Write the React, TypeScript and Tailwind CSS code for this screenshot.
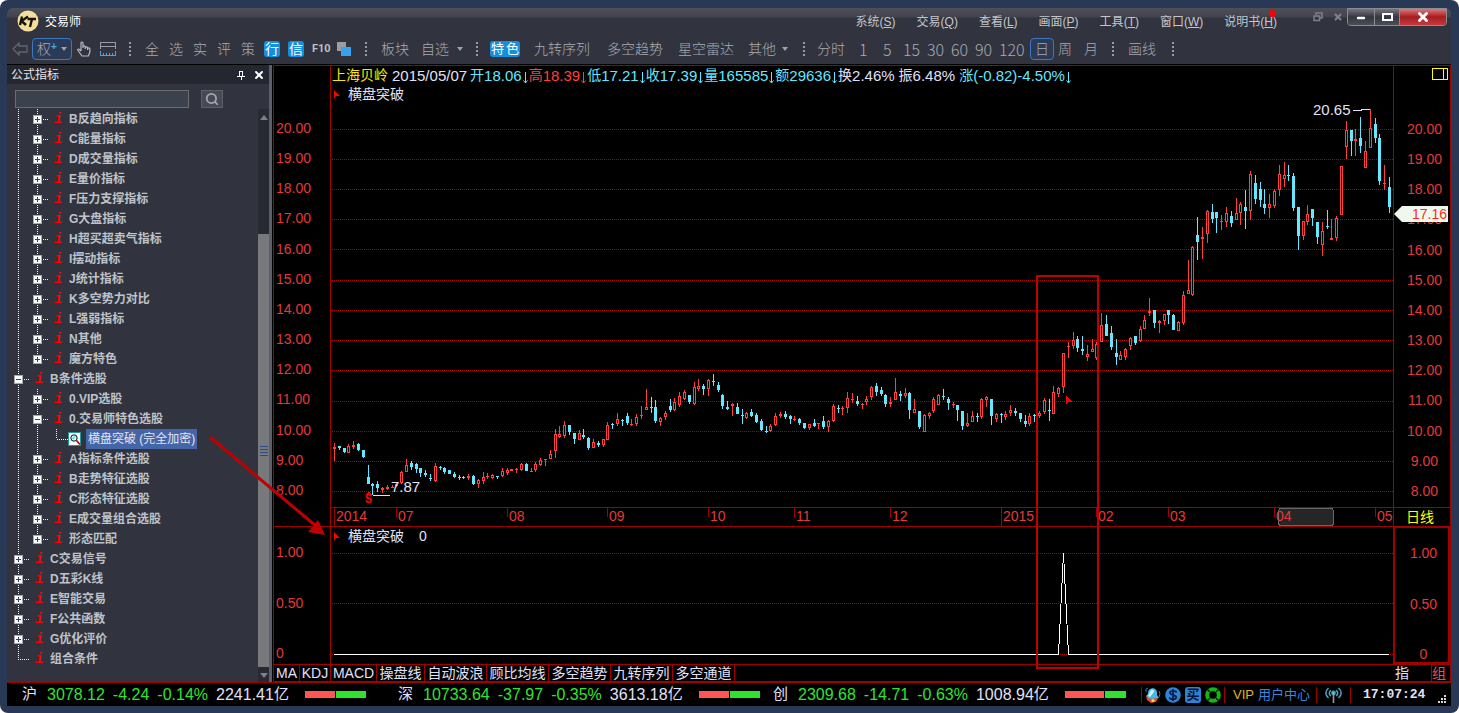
import { Minus, Search, X } from "lucide-react"
import clsx from "clsx"

// [up, high, body top, body bottom, low]
const candles: number[][] = [
  [1,443,447,449,461],[0,446,446,448,450],[0,448,448,452,453],[1,444,446,453,453],[1,441,445,447,449],
  [0,443,444,450,451],[0,450,450,457,458],[0,465,477,484,484],[0,483,484,486,495],[0,481,484,488,492],
  [1,487,488,490,493],[1,485,487,489,490],[1,485,487,488,488],[1,483,484,486,487],[1,471,472,483,484],
  [1,459,465,472,472],[0,461,463,467,470],[0,463,464,469,473],[0,468,468,473,477],[0,470,473,475,477],
  [0,474,478,479,481],[1,463,466,481,482],[0,466,467,468,470],[0,467,468,472,474],[0,470,470,474,474],
  [0,472,474,477,478],[0,475,477,478,480],[0,476,477,478,479],[1,474,476,478,480],[0,475,476,484,485],
  [1,479,480,484,488],[1,472,477,481,484],[1,473,476,477,479],[1,474,475,478,479],[0,476,476,477,479],
  [1,468,471,476,477],[1,468,470,473,475],[1,469,469,471,471],[1,468,469,470,473],[1,463,464,470,471],
  [0,463,464,471,471],[1,468,471,472,472],[1,462,464,470,472],[1,458,460,465,466],[1,459,459,460,466],
  [1,450,454,459,459],[1,429,434,451,458],[1,426,434,437,438],[1,421,425,436,438],[0,425,425,432,435],
  [0,433,433,439,444],[1,430,433,440,440],[0,429,435,437,439],[0,437,438,448,450],[1,439,442,448,448],
  [0,441,443,445,447],[1,439,439,445,447],[1,422,425,440,440],[0,423,424,425,429],[1,413,419,424,426],
  [0,419,420,421,426],[0,413,416,423,425],[1,419,424,425,426],[1,414,417,424,426],[1,406,415,416,419],
  [1,389,407,410,410],[0,397,407,408,413],[0,400,407,421,423],[1,417,418,422,426],[1,411,413,417,420],
  [0,399,406,410,412],[1,398,402,410,411],[1,392,396,405,407],[1,390,392,399,400],[0,395,395,402,404],
  [1,382,387,404,405],[1,379,386,389,391],[0,384,386,389,395],[1,379,380,389,396],[0,374,381,382,386],
  [0,382,385,390,392],[0,394,395,406,409],[0,401,407,409,410],[1,403,404,406,416],[0,403,407,414,414],
  [0,409,415,416,424],[1,412,413,418,419],[0,409,412,416,417],[0,413,415,422,423],[0,419,421,430,431],
  [0,426,431,432,433],[1,424,426,431,432],[1,413,416,425,426],[1,412,414,416,418],[0,411,414,417,419],
  [0,415,416,419,424],[1,416,419,420,421],[0,418,419,423,425],[0,423,423,428,429],[1,424,424,428,430],
  [0,419,423,426,427],[1,423,423,424,429],[0,416,421,427,429],[1,420,421,427,432],[1,404,406,421,422],
  [0,405,408,409,413],[1,406,408,409,415],[1,392,398,408,413],[1,393,399,400,403],[0,396,401,404,406],
  [1,403,404,405,409],[1,396,399,402,405],[1,386,387,397,400],[0,383,386,392,396],[0,387,390,394,396],
  [0,394,395,404,407],[1,397,402,404,407],[1,378,392,400,400],[0,391,394,396,401],[1,388,393,396,398],
  [0,392,393,410,419],[1,399,409,413,413],[0,411,411,427,429],[1,414,415,432,432],[1,412,413,416,419],
  [1,397,399,411,413],[1,394,395,405,405],[0,389,396,397,400],[0,397,399,403,410],[1,402,404,405,408],
  [0,405,405,410,421],[0,411,411,426,430],[1,413,423,426,427],[1,411,416,422,422],[0,413,416,417,422],
  [1,398,399,417,419],[1,396,397,400,407],[0,399,399,416,425],[1,413,414,419,422],[0,413,414,415,423],
  [1,411,414,417,420],[1,405,410,413,416],[0,408,411,413,416],[0,413,413,419,422],[0,415,421,424,427],
  [1,413,416,424,426],[0,414,415,416,422],[1,411,413,416,418],[1,398,400,412,414],[0,399,410,411,421],
  [1,386,392,414,414],[1,387,388,394,397],[1,353,353,387,393],[1,342,346,347,358],[1,332,340,346,349],
  [0,336,339,348,352],[0,336,349,351,355],[1,345,354,357,361],[1,339,349,352,352],[1,342,344,358,360],
  [1,313,325,342,342],[0,315,324,336,336],[0,326,333,347,350],[0,339,353,357,365],[1,351,355,360,360],
  [1,348,349,357,360],[1,337,338,346,350],[0,336,336,343,345],[1,326,329,341,342],[1,315,320,329,329],
  [1,298,311,313,316],[0,310,310,323,328],[1,320,321,323,333],[1,314,314,321,325],[0,310,310,315,324],
  [0,314,315,330,330],[1,321,322,331,331],[1,291,295,323,325],[1,260,290,294,294],[1,246,247,295,296],
  [0,217,235,242,260],[1,227,237,239,259],[1,210,211,234,243],[0,204,212,219,223],[0,212,212,218,233],
  [1,215,221,222,230],[1,207,213,222,227],[0,211,216,223,227],[1,198,213,220,220],[1,202,204,213,225],
  [0,190,207,211,229],[1,171,174,211,220],[0,175,183,199,204],[0,182,189,200,207],[0,189,204,208,214],
  [1,194,204,208,218],[1,189,191,206,208],[1,165,174,190,196],[1,162,175,179,187],[0,165,175,176,181],
  [0,173,176,208,211],[0,207,207,236,250],[1,221,221,236,240],[1,205,214,222,225],[0,209,209,218,226],
  [0,222,222,237,244],[1,222,231,245,256],[0,210,226,227,229],[1,219,238,240,240],[1,216,218,238,241],
  [1,166,166,215,215],[1,121,130,147,159],[0,130,130,141,156],[1,129,139,141,156],[0,117,138,146,153],
  [1,141,151,168,168],[1,109,128,148,148],[0,118,124,138,143],[0,134,138,181,185],[1,165,183,184,190],
  [0,177,187,207,213],
]

const gridLines = [129, 159, 189, 219, 249, 280, 310, 340, 370, 401, 431, 461, 491]
const prices = ["20.00", "19.00", "18.00", "17.00", "16.00", "15.00", "14.00", "13.00", "12.00", "11.00", "10.00", "9.00", "8.00"]

const months = [
  { label: "2014", x: 334, tall: true },
  { label: "07", x: 396 },
  { label: "08", x: 507 },
  { label: "09", x: 607 },
  { label: "10", x: 708 },
  { label: "11", x: 794 },
  { label: "12", x: 890 },
  { label: "2015", x: 1001, tall: true },
  { label: "02", x: 1096 },
  { label: "03", x: 1168 },
  { label: "04", x: 1274 },
  { label: "05", x: 1375 },
]

const menus = [
  ["系统", "S"],
  ["交易", "Q"],
  ["查看", "L"],
  ["画面", "P"],
  ["工具", "T"],
  ["窗口", "W"],
  ["说明书", "H"],
]

type Node = { label: string; level: 1 | 2 | 3; open?: boolean; leaf?: boolean; last?: boolean }

const tree: Node[] = [
  { label: "B反趋向指标", level: 2 },
  { label: "C能量指标", level: 2 },
  { label: "D成交量指标", level: 2 },
  { label: "E量价指标", level: 2 },
  { label: "F压力支撑指标", level: 2 },
  { label: "G大盘指标", level: 2 },
  { label: "H超买超卖气指标", level: 2 },
  { label: "I摆动指标", level: 2 },
  { label: "J统计指标", level: 2 },
  { label: "K多空势力对比", level: 2 },
  { label: "L强弱指标", level: 2 },
  { label: "N其他", level: 2 },
  { label: "魔方特色", level: 2, last: true },
  { label: "B条件选股", level: 1, open: true },
  { label: "0.VIP选股", level: 2 },
  { label: "0.交易师特色选股", level: 2, open: true },
  { label: "横盘突破 (完全加密)", level: 3, leaf: true },
  { label: "A指标条件选股", level: 2 },
  { label: "B走势特征选股", level: 2 },
  { label: "C形态特征选股", level: 2 },
  { label: "E成交量组合选股", level: 2 },
  { label: "形态匹配", level: 2, last: true },
  { label: "C交易信号", level: 1 },
  { label: "D五彩K线", level: 1 },
  { label: "E智能交易", level: 1 },
  { label: "F公共函数", level: 1 },
  { label: "G优化评价", level: 1 },
  { label: "组合条件", level: 1, leaf: true, last: true },
]

const quotes = [
  { name: "沪", value: "3078.12", change: "-4.24", pct: "-0.14%", amount: "2241.41", red: "w-[30px]", green: "w-[30px]", width: "w-[376px]" },
  { name: "深", value: "10733.64", change: "-37.97", pct: "-0.35%", amount: "3613.18", red: "w-[30px]", green: "w-[30px]", width: "w-[375px]" },
  { name: "创", value: "2309.68", change: "-14.71", pct: "-0.63%", amount: "1008.94", red: "w-[39px]", green: "w-[21px]", width: "w-[368px]" },
]

const summary = [
  { label: "开", value: "18.06", arrow: true, color: "text-[#66e6ff]" },
  { label: "高", value: "18.39", arrow: true, color: "text-[#ff4040]" },
  { label: "低", value: "17.21", arrow: true, color: "text-[#66e6ff]" },
  { label: "收", value: "17.39", arrow: true, color: "text-[#66e6ff]" },
  { label: "量", value: "165585", arrow: true, color: "text-[#66e6ff]" },
  { label: "额", value: "29636", arrow: true, color: "text-[#66e6ff]" },
  { label: "换", value: "2.46%", arrow: false, color: "text-[#e0e0f8]" },
  { label: "振", value: "6.48%", arrow: false, color: "text-[#e0e0f8]" },
  { label: "涨", value: "(-0.82)-4.50%", arrow: true, color: "text-[#66e6ff]" },
]

const tabs = ["操盘线", "自动波浪", "顾比均线", "多空趋势", "九转序列", "多空通道"]

function Logo() {
  return (
    <svg className="h-[22px] w-[22px]" viewBox="0 0 22 22">
      <circle cx="11" cy="11" r="10.5" fill="#f5dd9c" />
      <path d="M5 6.500 3 15M11 6.500l-6.500 4.500 4.500 4" fill="none" stroke="#17140c" strokeWidth="2.400" />
      <path d="M10.500 9h8.500M15 9l-2 8" fill="none" stroke="#17140c" strokeWidth="2.400" />
    </svg>
  )
}

function Dots({ className }: { className?: string }) {
  return (
    <svg className={clsx("h-3.5 w-[3px] shrink-0", className)} viewBox="0 0 3 14" shapeRendering="crispEdges">
      <path d="M1.500 0v14" stroke="#9a9ca3" strokeWidth="2" strokeDasharray="2 2" />
    </svg>
  )
}

function Caret() {
  return (
    <svg className="h-1 w-[6px] shrink-0" viewBox="0 0 6 4">
      <path d="M0 0h6L3 4z" fill="#a0a2a8" />
    </svg>
  )
}

function Tool({ label, className }: { label: string; className: string }) {
  return <button className={clsx("shrink-0 whitespace-nowrap text-left", className)}>{label}</button>
}

function TitleBar() {
  return (
    <header className="flex h-[26px] items-center rounded-t-md bg-[linear-gradient(#4d4f59,#41444d_9px,#31343f_10px)] pl-2.5 text-xs text-[#c4c6cb]">
      <Logo />
      <h1 className="pt-0.5 pl-1.5 text-xs text-white">交易师</h1>
      <nav className="ml-auto flex gap-[21px] pt-0.5">
        {menus.map(([name, key]) => (
          <button key={key} className="relative whitespace-nowrap">
            {name}(<span className="underline">{key}</span>)
            {key === "H" && <span className="absolute -top-1 right-px h-[7px] w-[7px] rounded-full bg-[#ff0000]" />}
          </button>
        ))}
      </nav>
      <div className="ml-9 flex gap-2.5 self-start pt-1">
        <button aria-label="还原子窗口">
          <svg className="h-2.5 w-2.5" viewBox="0 0 10 10" fill="none" stroke="#7d8088" strokeWidth="1.500">
            <path d="M3 3V1h6v5H7M1 4h5.500v4.500H1z" />
          </svg>
        </button>
        <button aria-label="关闭子窗口">
          <X className="h-2.5 w-2.5 text-[#7d8088]" strokeWidth={5} />
        </button>
      </div>
      <div className="mr-1 ml-1 flex h-[18px] self-start overflow-hidden rounded-b border border-[#8b8d95] text-white">
        <button aria-label="最小化" className="flex w-[26px] items-end justify-center bg-[linear-gradient(#75777f,#34373f_50%,#4b4e56)] pb-0.5">
          <Minus className="h-2.5 w-3.5" strokeWidth={6} />
        </button>
        <button aria-label="最大化" className="flex w-[26px] items-center justify-center border-x border-[#8b8d95] bg-[linear-gradient(#75777f,#34373f_50%,#4b4e56)]">
          <span className="h-2 w-[11px] border-2 border-white" />
        </button>
        <button aria-label="关闭" className="flex w-[46px] items-center justify-center bg-[linear-gradient(#e0777a,#a51d20_50%,#c8393c)]">
          <X className="h-3.5 w-3.5" strokeWidth={5} />
        </button>
      </div>
    </header>
  )
}

function Toolbar() {
  return (
    <div className="flex h-[31px] items-center overflow-hidden border-b border-black bg-[#31343f] pl-[5px] text-sm font-light text-[#a9abb1]">
      <button aria-label="后退" className="w-5">
        <svg className="h-3.5 w-4" viewBox="0 0 16 14" fill="none" stroke="#62656e" strokeWidth="1.300">
          <path d="M1 7l6-6v3h8v6H7v3z" />
        </svg>
      </button>
      <button className="flex h-[22px] w-10 items-center justify-between rounded-sm border border-[#3b78c4] bg-[#2b3a57] px-1">
        <span>
          权<sup className="relative -top-1 text-[10px] font-bold text-[#3fa9f0]">+</sup>
        </span>
        <Caret />
      </button>
      <button aria-label="移动" className="ml-1 w-5">
        <svg className="h-4 w-4" viewBox="0 0 16 16" fill="none" stroke="#b8babf" strokeWidth="1.200">
          <path d="M5 10V2a1 1 0 0 1 2 0v5m0-1a1 1 0 0 1 2.300 0v2m0-1a1 1 0 0 1 2.300 0v2m0-1a1 1 0 0 1 2.300 0v3l-1.500 4H6L2 9.500c-.8-1 .5-1.900 1.400-1L5 10" />
        </svg>
      </button>
      <button aria-label="刻度" className="ml-1 w-7">
        <svg className="h-[15px] w-4" viewBox="0 0 16 15" shapeRendering="crispEdges" fill="none">
          <path d="M.5 7V.5h15V7M.5 4.500h15" stroke="#9a9ca3" />
          <path d="M.5 9v4.500h15V9M3.500 11v2M6.500 11v2M9.500 11v2M12.500 11v2" stroke="#3fa9f0" />
        </svg>
      </button>
      <Dots className="mr-3.5" />
      <Tool label="全" className="w-6" />
      <Tool label="选" className="w-6" />
      <Tool label="实" className="w-6" />
      <Tool label="评" className="w-6" />
      <Tool label="策" className="w-[23px]" />
      <button className="mr-2 h-4 w-4 rounded-[3px] bg-[#148fe0] text-center text-sm leading-4 font-normal text-white">行</button>
      <button className="mr-2 h-4 w-4 rounded-[3px] bg-[#148fe0] text-center text-sm leading-4 font-normal text-white">信</button>
      <button className="w-6 text-left font-['Roboto',sans-serif] text-[11px] font-bold text-[#bdbfc4]">F10</button>
      <button aria-label="叠加" className="w-7">
        <svg className="h-[15px] w-4" viewBox="0 0 16 15" shapeRendering="crispEdges">
          <path d="M1 0h9v9H1z" fill="#9b9da3" />
          <path d="M5 5h10v9H5z" fill="#38a3ec" />
        </svg>
      </button>
      <Dots className="mr-3.5" />
      <Tool label="板块" className="w-10" />
      <Tool label="自选" className="w-9" />
      <Caret />
      <Dots className="mr-3 ml-3" />
      <button className="mr-3.5 flex h-4 w-[30px] items-center justify-between rounded-[3px] bg-[#148fe0] px-px text-[13px] leading-4 font-normal text-white">
        <span>特</span>
        <span>色</span>
      </button>
      <Tool label="九转序列" className="w-[73px]" />
      <Tool label="多空趋势" className="w-[71px]" />
      <Tool label="星空雷达" className="w-[70px]" />
      <Tool label="其他" className="w-[34px]" />
      <Caret />
      <Dots className="mr-3 ml-3.5" />
      <Tool label="分时" className="w-[42px]" />
      <div className="flex font-['Noto_Sans_CJK_SC',sans-serif] text-base">
        <Tool label="1" className="w-6" />
        <Tool label="5" className="w-5" />
        <Tool label="15" className="w-6" />
        <Tool label="30" className="w-6" />
        <Tool label="60" className="w-6" />
        <Tool label="90" className="w-6" />
        <Tool label="120" className="w-[31px]" />
      </div>
      <button className="mr-1 h-[22px] w-6 rounded-sm border border-[#3b78c4] bg-[#2b3a57] leading-5">日</button>
      <Tool label="周" className="w-[26px]" />
      <Tool label="月" className="w-[27px]" />
      <Dots className="mr-3.5" />
      <Tool label="画线" className="w-[43px]" />
      <Dots />
    </div>
  )
}

function Guides({ node }: { node: Node }) {
  const { level, leaf, last, open } = node
  const x = level === 1 ? 11 : 30
  const width = level === 1 ? 28 : level === 2 ? 47 : 61
  return (
    <svg width={width} height="20" viewBox={`0 0 ${width} 20`} shapeRendering="crispEdges" fill="none">
      <g stroke="#f0f0f0" strokeDasharray="1 1">
        <path d={level === 1 && last ? "M11.500 0v10" : "M11.500 0v20"} />
        {level > 1 && <path d={last ? "M30.500 0v10" : "M30.500 0v20"} />}
        {level === 3 ? <path d="M49.500 0v10h11" /> : <path d={`M${x} 10.500h11`} />}
      </g>
      {!leaf && (
        <>
          <rect x={x - 3.5} y="6.500" width="8" height="8" fill="#fff" stroke="#a8a8a8" />
          <path d={`M${x - 2} 10.500h5`} stroke="#2a4383" />
          {!open && <path d={`M${x + 0.5} 8v5`} stroke="#2a4383" />}
        </>
      )}
    </svg>
  )
}

function FormulaIcon() {
  return (
    <svg className="mr-[5px] h-3.5 w-[13px]" viewBox="0 0 13 14">
      <path d="M.5.5h12v13H.5z" fill="#fff" stroke="#1d9c9c" />
      <circle cx="6" cy="6" r="3.200" fill="#bff" stroke="#111" />
      <path d="M4.500 7 7 4.500" stroke="#1bb" />
      <path d="m8.500 8.500 3.500 4" stroke="#c00" strokeWidth="1.800" />
    </svg>
  )
}

function Sidebar() {
  return (
    <aside className="mr-px flex w-[265px] shrink-0 flex-col border-r-[3px] border-[#5c5f68] bg-[#31343f]">
      <div className="flex h-[19px] items-center bg-[#24272f] px-1 text-xs text-[#e6e6ea]">
        <h2>公式指标</h2>
        <button aria-label="固定" className="ml-auto">
          <svg className="h-2.5 w-2" viewBox="0 0 8 10" shapeRendering="crispEdges" fill="none" stroke="#fff">
            <path d="M2.500 6V1.500h3V6M0 6.500h8M4 7v3M5.500 1v5" />
          </svg>
        </button>
        <button aria-label="关闭面板" className="ml-2">
          <X className="h-3 w-3 text-white" strokeWidth={4} />
        </button>
      </div>
      <form className="flex items-center gap-3 pt-1.5 pb-px pl-2">
        <input aria-label="搜索公式" className="h-[18px] w-[174px] border border-[#6b6c6c] bg-[#3c414e] px-1 text-xs text-white outline-none" />
        <button type="button" aria-label="搜索" className="flex h-[18px] w-[22px] items-center justify-center border border-[#5d6069] bg-[#474a55]">
          <Search className="h-3.5 w-3.5 text-[#a5a7ad]" strokeWidth={3} />
        </button>
      </form>
      <div className="flex min-h-0 flex-1">
        <ul className="min-w-0 flex-1 text-xs font-bold text-[#bfc3c9]">
          {tree.map((node) => (
            <li key={node.label} className="flex h-5 items-center whitespace-nowrap">
              <Guides node={node} />
              {node.level === 3 ? (
                <>
                  <FormulaIcon />
                  <button className="h-5 bg-[#4565a9] px-0.5 font-normal text-[#e2e6ee]">{node.label}</button>
                </>
              ) : (
                <>
                  <span className="w-[15px] font-['Liberation_Mono',monospace] text-sm text-[#ff0000] italic">i</span>
                  <button>{node.label}</button>
                </>
              )}
            </li>
          ))}
        </ul>
        <div className="flex w-[11px] flex-col items-center bg-[#272a33]">
          <svg className="mt-1.5 mb-0.5 h-[5px] w-2" viewBox="0 0 8 5">
            <path d="M0 5h8L4 0z" fill="#7d808a" />
          </svg>
          <div className="mt-28 flex w-full flex-1 items-center justify-center bg-[#77797d]">
            <svg className="h-2.5 w-2" viewBox="0 0 8 10" shapeRendering="crispEdges" stroke="#2b4a8c">
              <path d="M0 .5h8M0 3.500h8M0 6.500h8M0 9.500h8" />
            </svg>
          </div>
          <svg className="mt-1.5 mb-1 h-[5px] w-2" viewBox="0 0 8 5">
            <path d="M0 0h8L4 5z" fill="#7d808a" />
          </svg>
        </div>
      </div>
    </aside>
  )
}

function Candle({ data, index }: { data: number[]; index: number }) {
  const [up, high, top, bottom, low] = data
  const x = Math.round(334 + index * 4.7955)
  const color = up ? "#ff4040" : "#66e6ff"
  const hollow = up && bottom - top > 2
  return (
    <g fill={color}>
      <rect x={x} y={high} width="1" height={top - high} />
      <rect x={x} y={bottom} width="1" height={low - bottom} />
      <rect x={x - 1} y={top} width="3" height={bottom - top} />
      {hollow && <rect x={x} y={top + 1} width="1" height={bottom - top - 2} fill="#000" />}
    </g>
  )
}

function IndicatorName({ value }: { value?: string }) {
  return (
    <div className="flex items-center gap-2 pl-0.5 text-sm leading-[19px] text-[#e0e0f8]">
      <svg className="h-2.5 w-[6px]" viewBox="0 0 6 10">
        <path d="M0 0v9l2-3h4z" fill="#f00" />
      </svg>
      <span>横盘突破</span>
      {value && <span className="pl-[7px]">{value}</span>}
    </div>
  )
}

function PriceChart() {
  return (
    <div className="relative border-l border-[#a00000]">
      <svg className="absolute inset-0 h-full w-full" viewBox="331 66 1062 441" preserveAspectRatio="none" shapeRendering="crispEdges">
        {gridLines.map((y) => (
          <path key={y} d={`M332 ${y}.5H1393`} stroke="#b00000" strokeDasharray="1 1" />
        ))}
        {candles.map((c, i) => (
          <Candle key={i} data={c} index={i} />
        ))}
        <path d="M373 495.500h17M1353 110.500h8v-1h9" fill="none" stroke="#e0e0f8" />
        <path d="M1066 396v9l2-3h4z" fill="#f00" />
        <g className="font-['Liberation_Sans',sans-serif] text-[15px]" fill="#e0e0f8">
          <text x="391" y="492">7.87</text>
          <text x="1313" y="115">20.65</text>
        </g>
        <path d="M366 495l3-4 3 4z" fill="#f00" />
        <text x="365" y="503" fill="#f00" className="font-['Liberation_Mono',monospace] text-xs font-bold">S</text>
      </svg>
      <div className="relative pl-px leading-[19px] whitespace-nowrap text-[#e0e0f8]">
        <div className="flex text-[15px]">
          <span className="mr-1 text-sm leading-[19px] text-[#ffe600]">上海贝岭</span>
          <span className="mr-[3px]">2015/05/07</span>
          {summary.map((s) => (
            <span key={s.label} className={clsx("flex", s.color, s.arrow ? "" : "mr-1")}>
              <span className="text-sm leading-[19px]">{s.label}</span>
              {s.value}
              {s.arrow && (
                <svg className="mt-1.5 h-3 w-[7px]" viewBox="0 0 7 12" fill="none" stroke="currentColor">
                  <path d="M3.500 0v11M1.500 8.500l2 2.500 2-2.500" />
                </svg>
              )}
            </span>
          ))}
        </div>
        <IndicatorName />
      </div>
    </div>
  )
}

function PriceAxis({ right }: { right?: boolean }) {
  return (
    <div className={clsx("flex flex-col justify-between text-sm leading-5 text-[#e23a3a]", right ? "relative border-l border-[#a00000] pt-[53px] pr-2 pb-[6px] text-right" : "pt-[52px] pb-[7px] pl-0.5")}>
      {prices.map((p) => (
        <span key={p} className={clsx(right && p.length === 4 && "pr-1")}>{p}</span>
      ))}
      {right && (
        <>
          <svg className="absolute top-0.5 right-0.5 h-3 w-4" viewBox="0 0 16 12" shapeRendering="crispEdges" fill="none" stroke="#ff0">
            <path d="M.5.5h15v11H.5zM11.500 0v12" />
          </svg>
          <div className="absolute top-[140px] right-0.5 flex text-[#ff2a1a]">
            <svg className="h-4 w-2" viewBox="0 0 8 16">
              <path d="M8 0v16L0 8z" fill="#f0f8ee" />
            </svg>
            <span className="bg-[#f0f8ee] pr-px pl-2.5 leading-4">17.16</span>
          </div>
        </>
      )}
    </div>
  )
}

function Indicator() {
  return (
    <div className="relative border-t border-l border-[#a00000]">
      <svg className="absolute inset-0 h-full w-full" viewBox="331 527 1062 137" preserveAspectRatio="none" shapeRendering="crispEdges" fill="none">
        <path d="M332 553.500H1393M332 603.500H1393M332 654.500H1393" stroke="#b00000" strokeDasharray="1 1" />
        <path d="M334 654.500H1058.500L1063.500 553L1068.500 654.500H1389" stroke="#fff" />
      </svg>
      <div className="relative pl-px">
        <IndicatorName value="0" />
      </div>
    </div>
  )
}

function Chart() {
  return (
    <main className="grid min-w-0 flex-1 grid-cols-[56px_1fr_57px] grid-rows-[1fr_19px_138px_17px] border border-[#a00000] bg-black">
      <PriceAxis />
      <PriceChart />
      <PriceAxis right />

      <div />
      <div className="border-t border-l border-[#a00000]">
        <svg className="h-full w-full" viewBox="331 508 1062 18" preserveAspectRatio="none" shapeRendering="crispEdges">
          <rect x="1278.500" y="508.500" width="55" height="17" rx="3" fill="#262626" stroke="#666" />
          {months.map((m) => (
            <g key={m.label}>
              <path d={`M${m.x}.5 508v${m.tall ? 18 : 9}`} stroke="#a00000" />
              <text x={m.x + 2} y="521" fill="#e23a3a" className="font-['Liberation_Sans',sans-serif] text-sm">{m.label}</text>
            </g>
          ))}
        </svg>
      </div>
      <div className="border-t border-l border-[#a00000] pl-3 text-sm leading-[18px] text-[#ff0]">日线</div>

      <div className="flex flex-col justify-between border-t border-[#a00000] pt-[15px] pb-px pl-0.5 text-sm leading-5 text-[#e23a3a]">
        <span>1.00</span>
        <span>0.50</span>
        <span>0</span>
      </div>
      <Indicator />
      <div className="flex flex-col justify-between border-2 border-[#a00000] pt-[17px] pl-1 text-center text-sm leading-4 text-[#e23a3a]">
        <span>1.00</span>
        <span>0.50</span>
        <span>0</span>
      </div>

      <div className="col-span-2 flex border-t border-[#a00000] text-sm leading-4 whitespace-nowrap text-[#e0e0f8]">
        <button className="w-[26px] border-r border-[#a00000]">MA</button>
        <button className="w-[31px] border-r border-[#a00000]">KDJ</button>
        <button className="w-[46px] border-r border-[#a00000]">MACD</button>
        {tabs.map((t) => (
          <button key={t} className={clsx("border-r border-[#a00000]", t.length === 3 ? "w-12" : "w-[62px]")}>{t}</button>
        ))}
      </div>
      <div className="flex justify-between border-t border-[#a00000] pr-1 pl-0.5 text-sm leading-4 text-[#e0e0f8]">
        <button>指</button>
        <button className="border-l border-[#a00000] text-[#e8505a]">组</button>
      </div>
    </main>
  )
}

function StatusBar() {
  return (
    <footer className="flex h-6 items-center overflow-hidden border-t border-[#a00000] bg-black pl-[15px] text-base whitespace-nowrap text-[#e0e0f8]">
      {quotes.map((q) => (
        <div key={q.name} className={clsx("flex shrink-0 items-center gap-2", q.width)}>
          <span className="mr-0.5 text-[15px]">{q.name}</span>
          <span className="text-[#33e233]">{q.value}</span>
          <span className="text-[#33e233]">{q.change}</span>
          <span className="text-[#33e233]">{q.pct}</span>
          <span className="flex items-center">
            {q.amount}
            <span className="text-[15px]">亿</span>
          </span>
          <span className="ml-2 flex h-[7px] gap-px">
            <span className={clsx("bg-[#ff5555]", q.red)} />
            <span className={clsx("bg-[#2ee22e]", q.green)} />
          </span>
        </div>
      ))}
      <div className="flex h-4 items-center gap-1 border-l border-[#a00000] pr-[3px] pl-[3px]">
        <button aria-label="提醒">
          <svg className="h-4 w-4" viewBox="0 0 16 16">
            <path d="M5 2c4-2 8 1 7 6l2 3-9 2-4-4 2-2c0-2 0-4 2-5z" fill="#4ab7e0" />
            <path d="M6 3c2-1 3 0 3 2L5 10 3 9z" fill="#c9f2ff" />
            <path d="m1 9 4 3 8-1-2 4-5 1-4-3z" fill="#e94b22" />
            <circle cx="8" cy="13.500" r="1.500" fill="#ffd94a" />
            <path d="M1 5V2l2-1M14 4l1 3-1 3" stroke="#357b96" fill="none" />
          </svg>
        </button>
        <button aria-label="资金">
          <svg className="h-4 w-4" viewBox="0 0 16 16">
            <circle cx="8" cy="8" r="7.800" fill="#2d83d8" />
            <path d="M11.500 5.500C11 3.500 5 3 5 5.800S11.300 7.600 11.300 10.200 5 12.800 4.500 10.300M8 2v12" fill="none" stroke="#082044" strokeWidth="1.700" />
          </svg>
        </button>
        <button className="h-4 w-4 rounded-[3px] bg-[#2d83d8] text-center text-[13px] leading-4 font-bold text-[#06142c]">买</button>
        <button aria-label="刷新">
          <svg className="h-4 w-4" viewBox="0 0 16 16" fill="none">
            <circle cx="8" cy="8" r="5.800" stroke="#16b416" strokeWidth="4" />
            <path d="m2 2 3 3M14 2l-3 3M2 14l3-3M14 14l-3-3" stroke="#032c03" strokeWidth="1.500" />
          </svg>
        </button>
      </div>
      <button className="flex h-4 items-center gap-1 border-l border-[#a00000] pr-1.5 pl-2 text-[13px]">
        <span className="text-[#e8b020]">VIP</span>
        <span className="text-[#3d86d8]">用户中心</span>
      </button>
      <button aria-label="信号" className="flex h-4 items-center border-l border-[#a00000] px-2">
        <svg className="h-4 w-[17px]" viewBox="0 0 17 16" fill="none" stroke="#4aa0bd" strokeWidth="1.600">
          <path d="M3.500 1c-3.500 3-3.500 7 0 10M13.500 1c3.500 3 3.500 7 0 10M5.800 3.300c-2 2-2 3.800 0 5.700M11.200 3.300c2 2 2 3.800 0 5.700" />
          <circle cx="8.500" cy="6" r="1.600" fill="#9adcf0" />
          <path d="M8.500 7v9" stroke="#999" />
        </svg>
      </button>
      <time className="flex h-4 items-center border-l border-[#a00000] pl-3 font-['Liberation_Mono',monospace] text-[13px] font-bold">17:07:24</time>
      <svg className="mr-1 mb-0.5 ml-auto h-2.5 w-2.5 self-end" viewBox="0 0 10 10" fill="#d8d8d8">
        <path d="M7 1h2v2H7zM4 4h2v2H4zM7 4h2v2H7zM1 7h2v2H1zM4 7h2v2H4zM7 7h2v2H7z" />
      </svg>
    </footer>
  )
}

export default function App() {
  return (
    <div className="bg-white">
      <div className="flex min-h-screen flex-col rounded-lg bg-[#293955] pt-2 pr-2 pb-[7px] pl-[7px] font-['Liberation_Sans','Noto_Sans_CJK_SC',sans-serif]">
        <TitleBar />
        <Toolbar />
        <div className="relative flex flex-1 bg-black">
          <Sidebar />
          <Chart />
          {/* Callout arrow and frame */}
          <svg className="pointer-events-none absolute inset-0 h-full w-full" viewBox="7 65 1444 617" preserveAspectRatio="none" fill="none">
            <path d="M210 437 316 526" stroke="#c00000" strokeWidth="3" />
            <path d="m325 535-17-3 10-12z" fill="#c00000" />
            <rect x="1037" y="276" width="61" height="392" stroke="#c00000" strokeWidth="2" />
          </svg>
        </div>
        <StatusBar />
      </div>
    </div>
  )
}
